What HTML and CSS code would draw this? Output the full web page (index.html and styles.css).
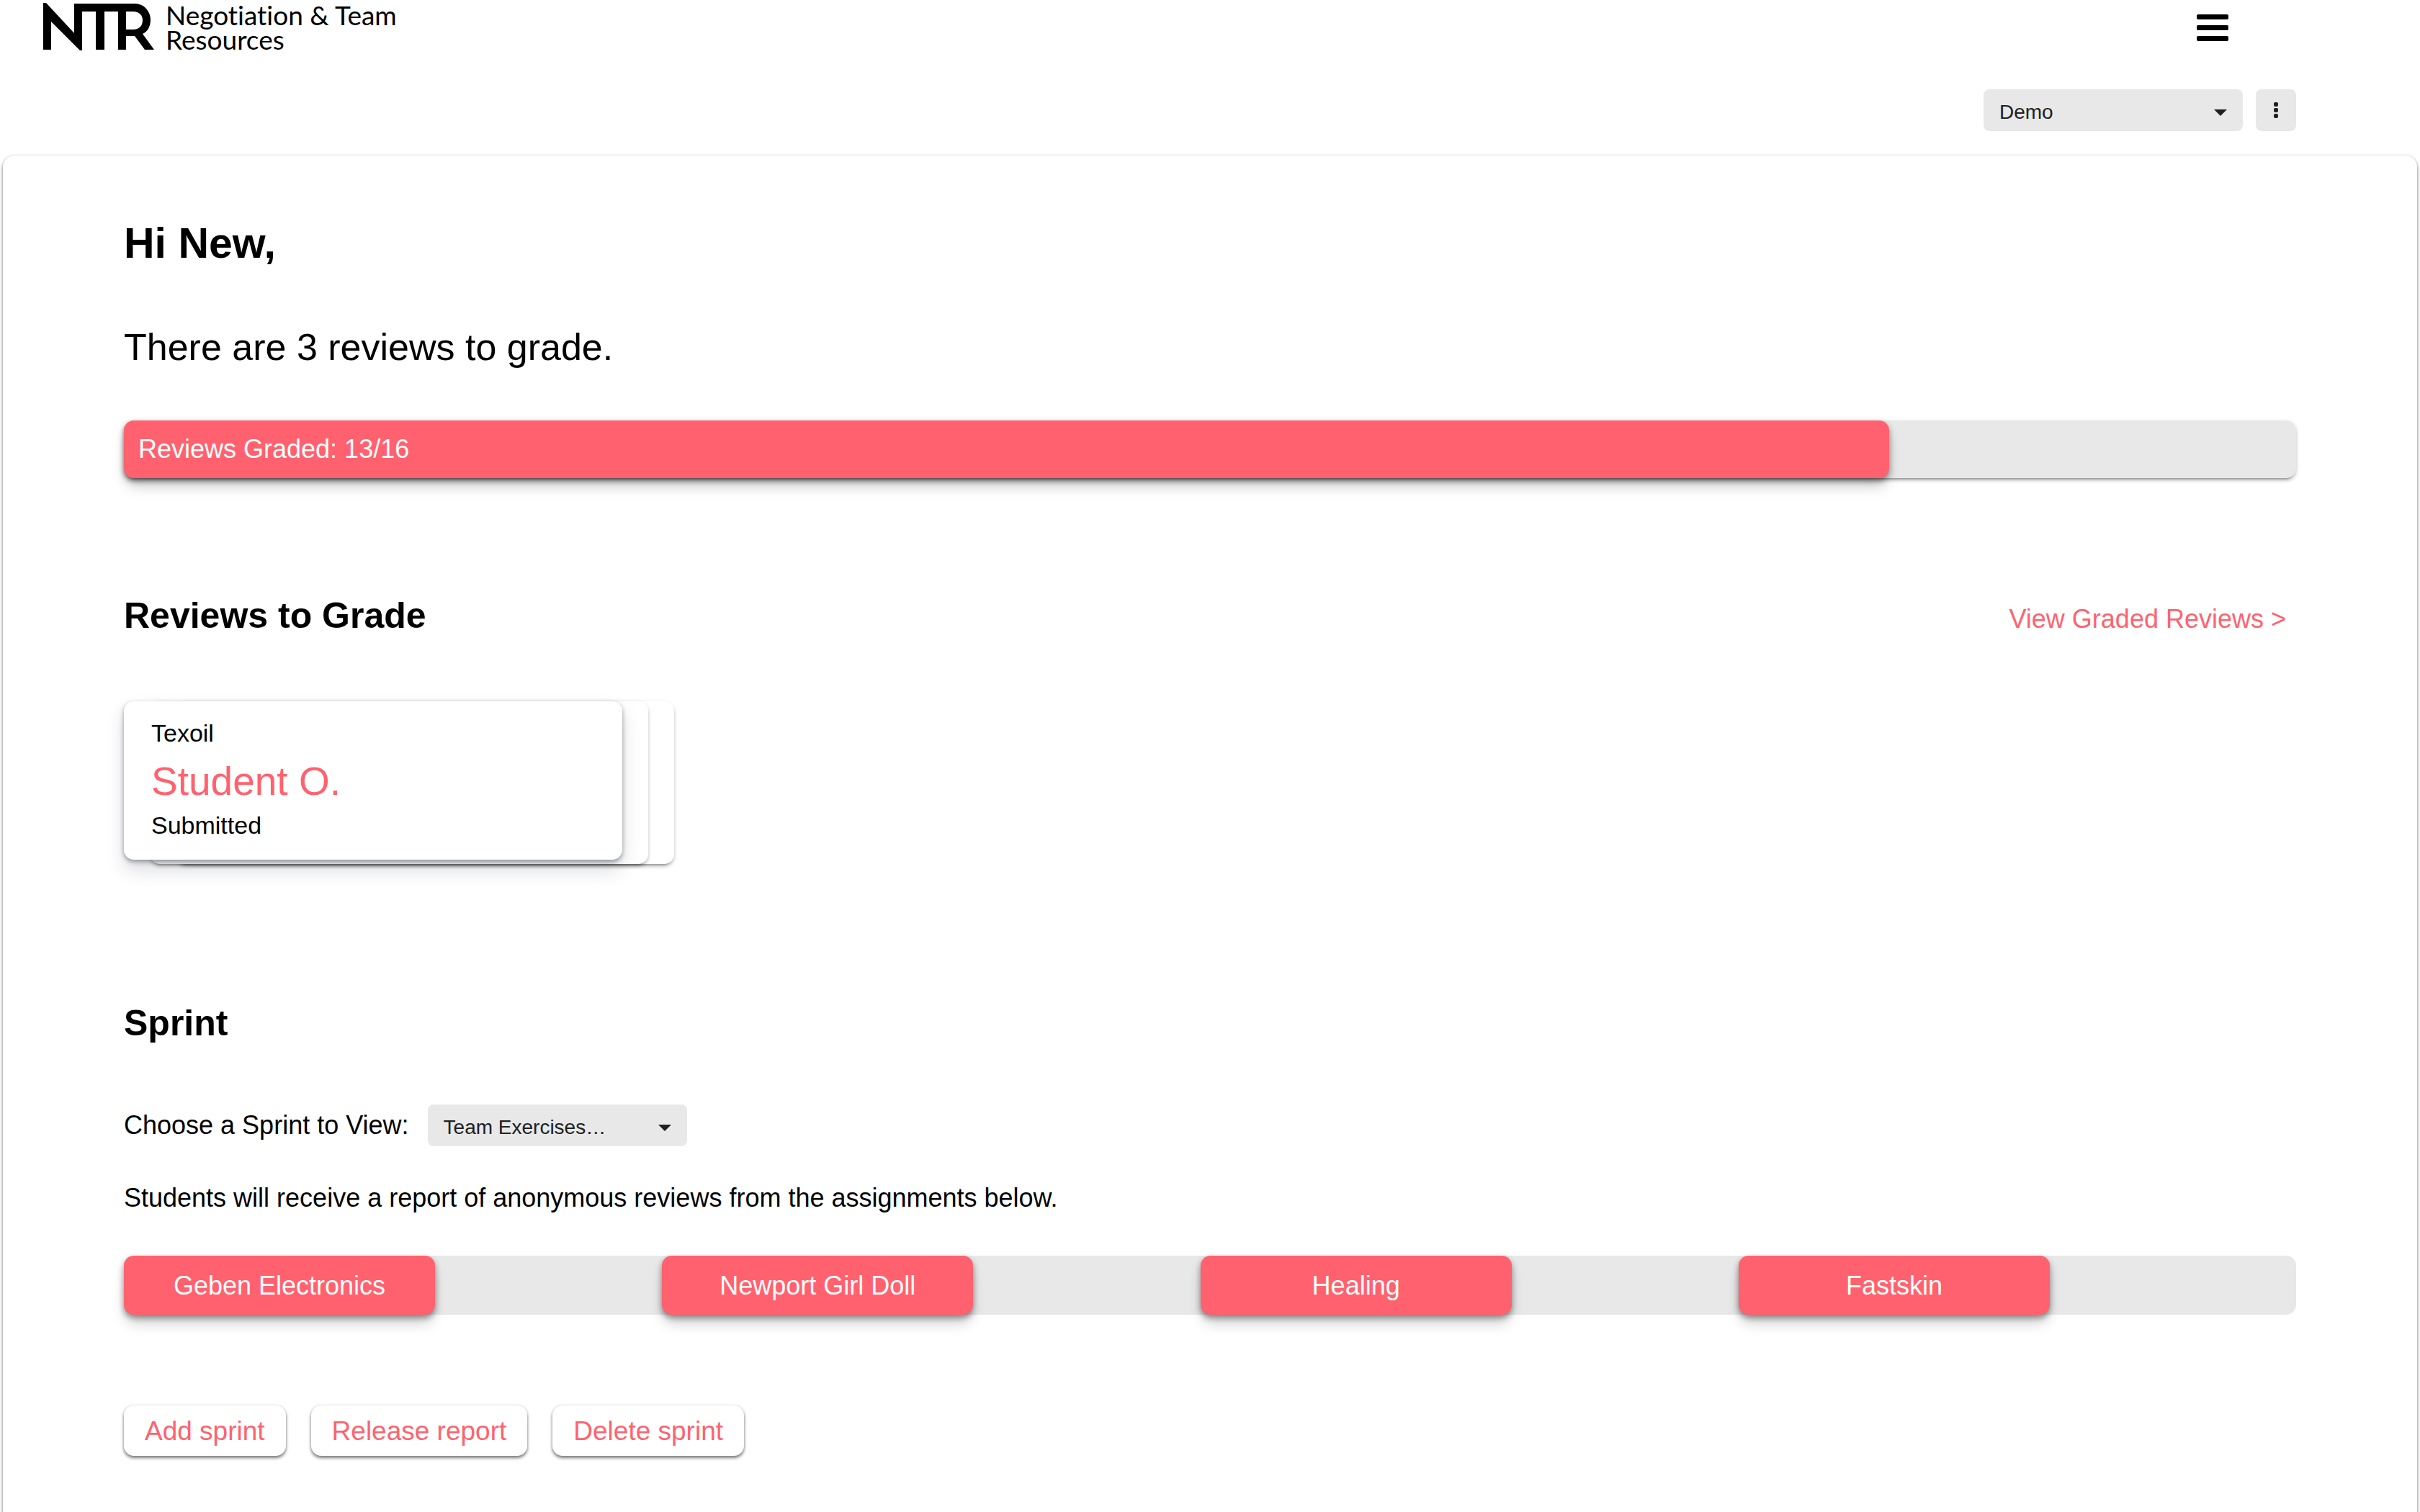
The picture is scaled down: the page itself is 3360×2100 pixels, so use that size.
FILE: index.html
```html
<!DOCTYPE html>
<html lang="en">
<head>
<meta charset="utf-8">
<meta name="viewport" content="width=device-width, initial-scale=1">
<title>Negotiation &amp; Team Resources</title>
<link rel="stylesheet" href="styles.css">
</head>
<body>
<header class="site-header">
  <a class="brand" href="#">
    <svg class="brand-mark" viewBox="0 0 154 66" aria-hidden="true">
      <path d="M0 0H4L43 42V1H127C141 1 149 13 149 23C149 33 145 40 138 43L154 65H141L127 46H115V65H104V12H85V65H73V12H54V66H51L11 26V65H0Z"/>
      <path class="brand-hole" d="M115 12H125C133 12 138 17 138 24C138 32 133 37 125 37H115Z"/>
    </svg>
    <span class="brand-name">Negotiation &amp; Team<br>Resources</span>
  </a>
  <button class="menu-button" type="button" aria-label="Menu"><span></span><span></span><span></span></button>
</header>
<div class="toolbar">
  <span class="picker">
    <select class="select" aria-label="Course"><option>Demo</option></select>
  </span>
  <button class="more-button" type="button" aria-label="More options"><span></span><span></span><span></span></button>
</div>
<main class="panel">
  <h1 class="greeting">Hi New,</h1>
  <p class="summary">There are 3 reviews to grade.</p>
  <div class="progress">
    <div class="progress-fill" style="width: 81.25%">Reviews Graded: 13/16</div>
  </div>

  <section class="reviews">
    <div class="section-head">
      <h2 class="section-title">Reviews to Grade</h2>
      <a class="section-link" href="#">View Graded Reviews &gt;</a>
    </div>
    <div class="stack">
      <div class="stack-back stack-third"></div>
      <div class="stack-back stack-second"></div>
      <article class="review-card">
        <p class="review-text">Texoil</p>
        <h3 class="review-name">Student O.</h3>
        <p class="review-text">Submitted</p>
      </article>
    </div>
  </section>

  <section class="sprint">
    <h2 class="section-title">Sprint</h2>
    <div class="sprint-choice">
      <label for="sprint-select">Choose a Sprint to View:</label>
      <span class="picker">
        <select class="select" id="sprint-select"><option>Team Exercises…</option></select>
      </span>
    </div>
    <p class="sprint-note">Students will receive a report of anonymous reviews from the assignments below.</p>
    <div class="track">
      <button class="track-item" type="button">Geben Electronics</button>
      <button class="track-item" type="button">Newport Girl Doll</button>
      <button class="track-item" type="button">Healing</button>
      <button class="track-item" type="button">Fastskin</button>
    </div>
    <div class="actions">
      <button class="action" type="button">Add sprint</button>
      <button class="action" type="button">Release report</button>
      <button class="action" type="button">Delete sprint</button>
    </div>
  </section>
</main>
</body>
</html>
```
FILE: styles.css
```css
:root {
  --accent: #ff626e;
  --muted: #e8e8e8;
  --ink: #202020;
  --raised: 0 6px 2px -4px rgba(0, 0, 0, .2), 0 4px 4px rgba(0, 0, 0, .14), 0 2px 6px rgba(0, 0, 0, .12);
  --edged: 0 3px 4px rgba(0, 0, 0, .5), 0 0 4px rgba(0, 0, 0, .12);
  --lifted: 0 4px 8px rgba(0, 0, 0, .4), 0 14px 20px -4px rgba(0, 0, 0, .22);
  --floating: 0 3px 6px rgba(40, 46, 60, .45), 0 14px 26px rgba(40, 46, 60, .16);
}

* { box-sizing: border-box; }

body {
  margin: 0;
  background: #fff;
  color: #000;
  font: 36px/42px "Liberation Sans", Arial, sans-serif;
}

h1, h2, h3, p { margin: 0; }
button, select { font: inherit; border: 0; cursor: pointer; }

.site-header {
  display: flex;
  justify-content: space-between;
  align-items: flex-start;
  padding: 4px 266px 0 60px;
  height: 124px;
}

.brand {
  display: flex;
  gap: 16px;
  color: #000;
  text-decoration: none;
}

.brand-mark { width: 154px; height: 66px; }
.brand-hole { fill: #fff; }

.brand-name {
  font: 37px/34px Lato, sans-serif;
  font-variant-ligatures: none;
}

.menu-button {
  display: flex;
  flex-direction: column;
  gap: 8px;
  margin-top: 16px;
  padding: 0;
  background: none;
}

.menu-button span {
  width: 44px;
  height: 7px;
  border-radius: 2px;
  background: #000;
}

.toolbar {
  display: flex;
  justify-content: flex-end;
  gap: 18px;
  padding: 0 172px 34px;
}

.picker {
  position: relative;
  display: inline-flex;
}

.picker::after {
  content: "";
  position: absolute;
  right: 22px;
  top: 28px;
  border: 9px solid transparent;
  border-top-color: var(--ink);
  border-bottom: 0;
  pointer-events: none;
}

.select {
  appearance: none;
  width: 360px;
  height: 58px;
  padding: 5px 48px 0 22px;
  border-radius: 8px;
  background: var(--muted);
  color: var(--ink);
  font-size: 28px;
}

.more-button {
  display: flex;
  flex-direction: column;
  align-items: center;
  justify-content: center;
  gap: 2px;
  width: 56px;
  height: 58px;
  padding: 0;
  border-radius: 8px;
  background: var(--muted);
}

.more-button span {
  width: 6px;
  height: 6px;
  border-radius: 2px;
  background: var(--ink);
}

.panel {
  min-height: calc(100vh - 216px);
  margin: 0 4px;
  padding: 88px 168px 74px;
  border-radius: 16px 16px 0 0;
  box-shadow: var(--edged);
}

.greeting {
  font-size: 59px;
  line-height: 68px;
}

.summary {
  margin-top: 80px;
  font-size: 52px;
  line-height: 60px;
}

.progress {
  margin-top: 72px;
  border-radius: 14px;
  background: var(--muted);
  box-shadow: var(--raised);
}

.progress-fill {
  padding: 19px 20px;
  border-radius: 14px;
  background: var(--accent);
  box-shadow: var(--lifted);
  color: #fff;
}

.reviews { margin-top: 161px; }

.section-head {
  display: flex;
  justify-content: space-between;
  align-items: baseline;
  padding-right: 14px;
}

.section-title {
  font-size: 50px;
  line-height: 60px;
}

.section-link {
  color: var(--accent);
  text-decoration: none;
}

.stack {
  position: relative;
  width: 764px;
  height: 226px;
  margin-top: 89px;
}

.stack-back {
  position: absolute;
  top: 0;
  width: 692px;
  height: 226px;
  border-radius: 14px;
  background: #fff;
  box-shadow: var(--raised);
}

.stack-second { left: 36px; }
.stack-third { left: 72px; }

.review-card {
  position: relative;
  width: 692px;
  height: 220px;
  padding: 24px 38px;
  border-radius: 14px;
  background: #fff;
  box-shadow: var(--floating);
}

.review-text {
  font-size: 34px;
  line-height: 40px;
}

.review-name {
  padding: 15px 0 9px;
  color: var(--accent);
  font-size: 55px;
  font-weight: 400;
  line-height: 64px;
}

.sprint { margin-top: 191px; }

.sprint-choice {
  display: flex;
  align-items: center;
  gap: 26px;
  margin-top: 83px;
}

.sprint-note { margin-top: 51px; }

.track {
  display: flex;
  justify-content: space-between;
  margin-top: 59px;
  padding-right: 342px;
  border-radius: 14px;
  background: var(--muted);
}

.track-item {
  width: 432px;
  padding: 21px 0 19px;
  border-radius: 14px;
  background: var(--accent);
  box-shadow: var(--lifted);
  color: #fff;
}

.actions {
  display: flex;
  gap: 35px;
  margin-top: 126px;
}

.action {
  padding: 15px 29px 13px;
  border-radius: 14px;
  background: #fff;
  box-shadow: var(--edged);
  color: var(--accent);
  font-size: 37px;
}
```
